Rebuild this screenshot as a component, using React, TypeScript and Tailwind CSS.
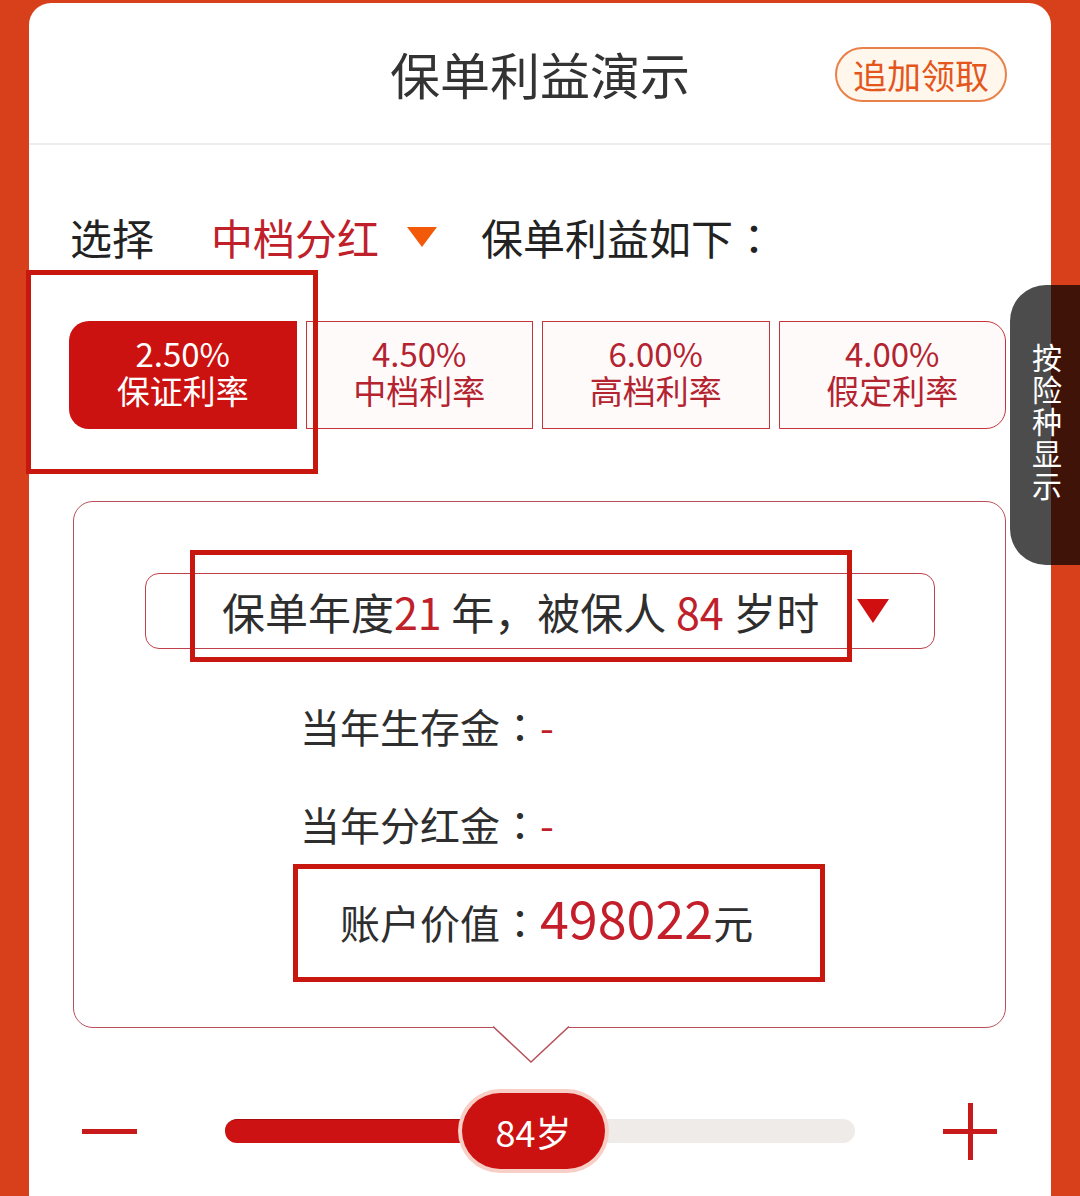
import React from "react";

const FONT = { fontFamily: '"Noto Sans CJK SC", "Noto Sans", sans-serif' };
// full-width colon centred in its cell
const COLON = { fontFamily: '"Noto Sans CJK JP", "Noto Sans CJK SC", sans-serif' };

type Rate = { value: string; label: string };

const rates: Rate[] = [
  { value: "2.50%", label: "保证利率" },
  { value: "4.50%", label: "中档利率" },
  { value: "6.00%", label: "高档利率" },
  { value: "4.00%", label: "假定利率" },
];

// red outline drawn over the page to mark a region
const Mark = ({ className }: { className: string }) => (
  <div className={`absolute border-[5px] border-[#c8170e] pointer-events-none ${className}`} />
);

const RateTabs = () => (
  <div className="mt-[63px] ml-[40px] mr-[45px] grid grid-cols-4 gap-[9px] h-[108px]">
    {rates.map((r, i) => {
      const active = i === 0;
      const last = i === rates.length - 1;
      return (
        <div
          key={r.label}
          className={
            active
              ? "rounded-l-[20px] bg-[#cc1111] text-white flex flex-col items-center justify-center pb-[6px]"
              : `border border-[#c4343a] bg-[#fffafa] text-[#b42330] flex flex-col items-center justify-center pb-[6px] ${
                  last ? "rounded-r-[20px]" : ""
                }`
          }
        >
          <span className="text-[33px] leading-[37px]">{r.value}</span>
          <span className="text-[33px] leading-[37px]">{r.label}</span>
        </div>
      );
    })}
  </div>
);

const Row = ({ label, children }: { label: string; children: React.ReactNode }) => (
  <div className="flex items-baseline">
    <span className="w-[466px] text-right text-[40px] leading-[40px] text-[#2e2e2e]">
      {label}
      <span style={COLON}>：</span>
    </span>
    {children}
  </div>
);

const Slider = () => (
  <div className="mt-[65px] h-[76px] flex items-center">
    <div className="ml-[53px] w-[55px] h-[5px] bg-[#c81a1a]" />
    <div className="ml-[88px] relative w-[630px] h-[24px] rounded-full bg-[#efebe8]">
      <div className="h-full w-[260px] rounded-full bg-[#cc1212] border-t border-[#a80c0c]" />
      <div className="absolute left-[237px] top-[-26px] w-[143px] h-[76px] rounded-full bg-[#cc1111] ring-4 ring-[#f7cfc6] flex items-center justify-center text-white text-[36px] leading-none">
        84岁
      </div>
    </div>
    <div className="ml-[88px] relative w-[54px] h-[57px]">
      <div className="absolute left-0 top-[26px] w-full h-[5px] bg-[#c81a1a]" />
      <div className="absolute top-0 left-[25px] h-full w-[5px] bg-[#c81a1a]" />
    </div>
  </div>
);

export default function App() {
  return (
    <div className="relative w-[1080px] h-[1196px] overflow-hidden bg-[#d8401b] pt-[3px] pl-[29px]" style={FONT}>
      <div className="w-[1022px] h-[1230px] bg-white rounded-t-[22px]">
        {/* header */}
        <div className="relative h-[142px] border-b-2 border-[#ededed] flex items-center justify-center">
          <h1 className="text-[50px] leading-none text-[#333]">保单利益演示</h1>
          <button className="absolute right-[44px] top-[44px] w-[172px] h-[55px] rounded-full border-2 border-[#e8824a] bg-[#fff6ec] text-[#e4561c] text-[34px] leading-none flex items-center justify-center">
            追加领取
          </button>
        </div>

        {/* dividend level picker */}
        <div className="mt-[71px] pl-[41px] h-[42px] flex items-center text-[42px] leading-none">
          <span className="text-[#222]">选择</span>
          <span className="ml-[57px] text-[#c0202a]">中档分红</span>
          <svg className="ml-[28px]" width="30" height="20" viewBox="0 0 30 20">
            <polygon points="0,0 30,0 15,20" fill="#f25a0a" />
          </svg>
          <span className="ml-[44px] text-[#222]">
            保单利益如下<span style={COLON}>：</span>
          </span>
        </div>

        <RateTabs />

        {/* benefit detail box */}
        <div className="relative mt-[72px] ml-[44px] w-[933px] h-[527px] border border-[#b8505a] rounded-[20px]">
          <div className="mt-[71px] ml-[71px] w-[790px] h-[76px] border border-[#c0404a] rounded-[14px] flex items-center">
            <span className="pl-[76px] text-[43px] leading-none text-[#2e2e2e]">
              保单年度<span className="text-[#c0202a]">21</span> 年，被保人 <span className="text-[#c0202a]">84</span> 岁时
            </span>
            <svg className="ml-auto mr-[45px]" width="32" height="24" viewBox="0 0 32 24">
              <polygon points="0,0 32,0 16,24" fill="#d01010" />
            </svg>
          </div>

          <div className="mt-[57px]">
            <Row label="当年生存金">
              <span className="text-[40px] leading-[40px] text-[#c01e28]">-</span>
            </Row>
          </div>
          <div className="mt-[58px]">
            <Row label="当年分红金">
              <span className="text-[40px] leading-[40px] text-[#c01e28]">-</span>
            </Row>
          </div>
          <div className="mt-[45px]">
            <Row label="账户价值">
              <span className="text-[52px] leading-[56px] text-[#c41e2a]">498022</span>
              <span className="text-[40px] leading-[40px] text-[#2e2e2e]">元</span>
            </Row>
          </div>

          {/* pointer under the box */}
          <svg className="absolute left-[419px] top-full -mt-px" width="76" height="37" viewBox="0 0 76 37">
            <polygon points="0,0 76,0 38,36" fill="#ffffff" />
            <polyline points="0,0.5 38,36 76,0.5" fill="none" stroke="#b8505a" strokeWidth="1.5" />
          </svg>
        </div>

        <Slider />
      </div>

      {/* side switch */}
      <div className="absolute left-[1010px] top-[285px] w-[80px] h-[280px] rounded-l-[36px] bg-black/70 flex flex-col items-start justify-center pl-[22px] pb-[10px] text-white text-[30px] leading-[32px]">
        {"按险种显示".split("").map((c) => (
          <span key={c}>{c}</span>
        ))}
      </div>

      <Mark className="left-[26px] top-[270px] w-[292px] h-[204px]" />
      <Mark className="left-[190px] top-[550px] w-[662px] h-[112px]" />
      <Mark className="left-[293px] top-[864px] w-[532px] h-[118px]" />
    </div>
  );
}
